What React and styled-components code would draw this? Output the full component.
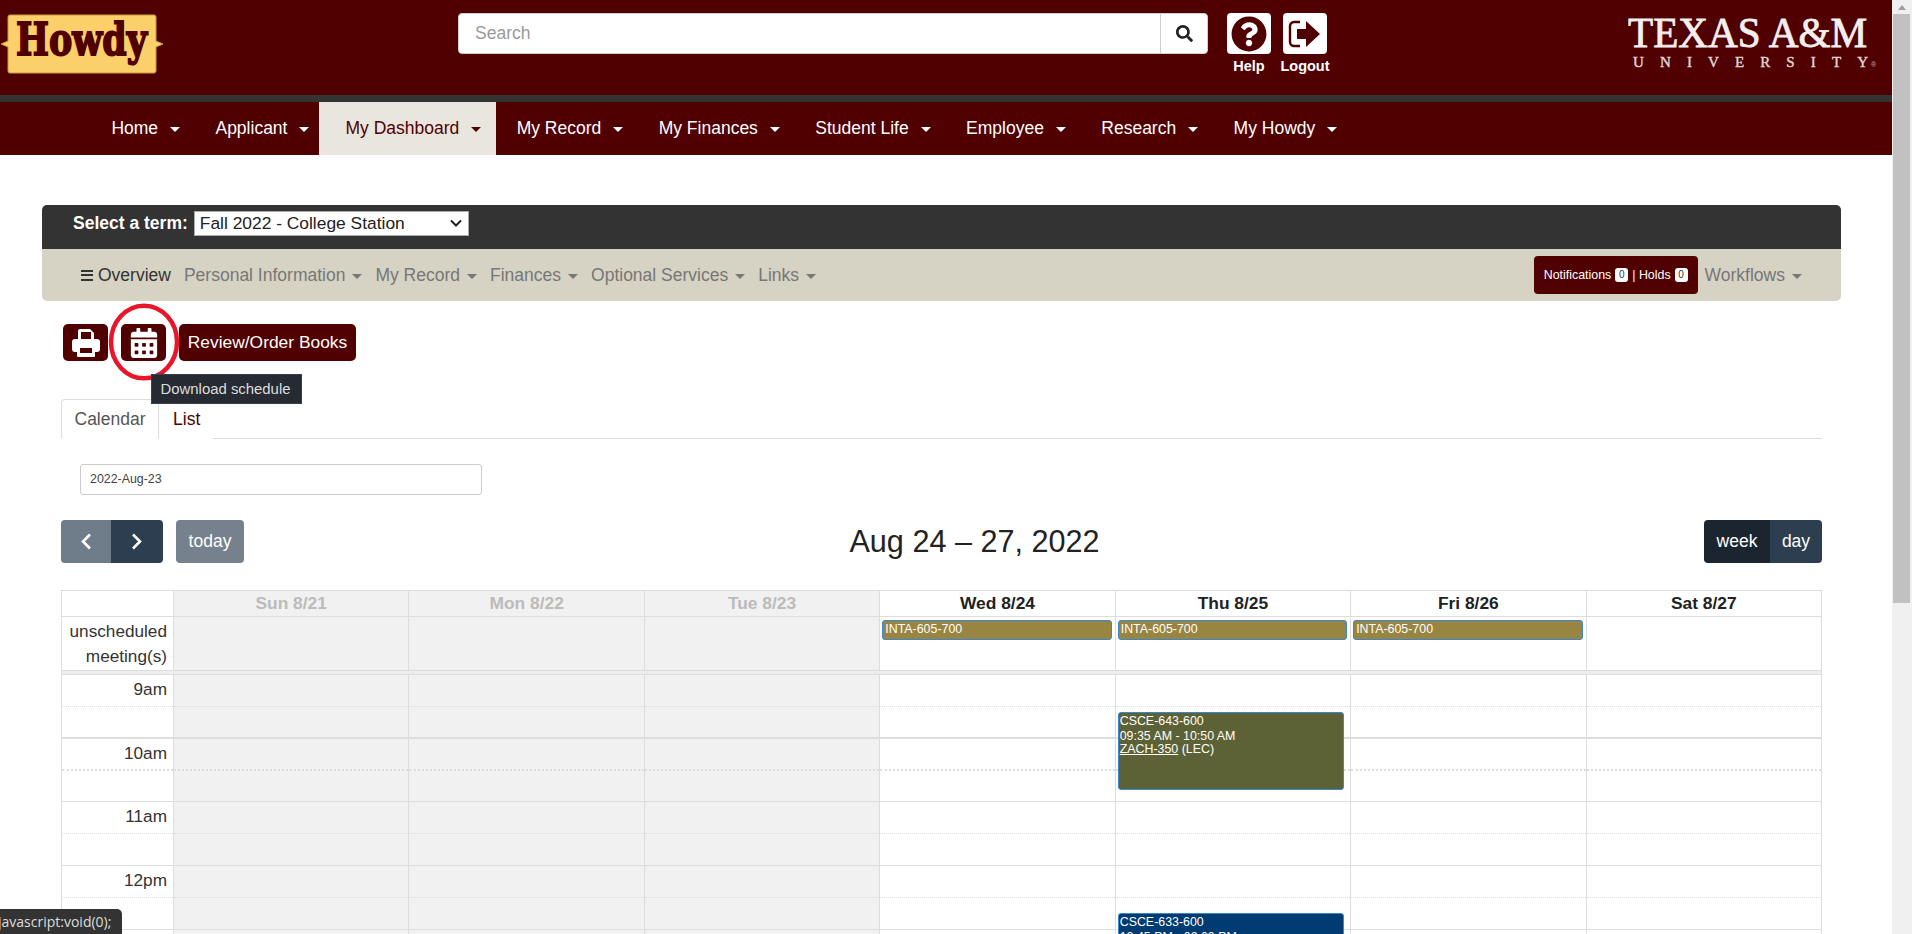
import React from 'react';
import styled, { createGlobalStyle } from 'styled-components';
import { FaCalendarAlt, FaSearch, FaQuestionCircle } from 'react-icons/fa';

const GlobalStyle = createGlobalStyle`
    html, body {
        margin: 0;
        padding: 0;
        height: 100%;
        overflow: hidden;
        background: #fff;
    }
    * {
        box-sizing: border-box;
    }
    body {
        font-family: "Liberation Sans", Arial, sans-serif;
        font-size: 17.5px;
        color: #222;
    }
`;

const topNav = ['Home', 'Applicant', 'My Dashboard', 'My Record', 'My Finances', 'Student Life', 'Employee', 'Research', 'My Howdy'];
const subNav = ['Personal Information', 'My Record', 'Finances', 'Optional Services', 'Links'];
const days = [
    { label: 'Sun 8/21', off: true },
    { label: 'Mon 8/22', off: true },
    { label: 'Tue 8/23', off: true },
    { label: 'Wed 8/24', allDay: true },
    { label: 'Thu 8/25', allDay: true, events: [
        { code: 'CSCE-643-600', time: '09:35 AM - 10:50 AM', room: 'ZACH-350', kind: '(LEC)', top: 37, height: 78, bg: '#5d6236' },
        { code: 'CSCE-633-600', time: '12:45 PM - 02:00 PM', room: 'ZACH-350', kind: '(LEC)', top: 238, height: 78, bg: '#003c71' },
    ] },
    { label: 'Fri 8/26', allDay: true },
    { label: 'Sat 8/27' },
];
const hours = ['9am', '10am', '11am', '12pm', '1pm'];

const LogoutIcon = () => (
    <svg width="34" height="30" viewBox="0 0 34 30">
        <path d="M12 3H6a4 4 0 0 0-4 4v16a4 4 0 0 0 4 4h6" fill="none" stroke="#500000" strokeWidth="2.4" />
        <path d="M9 10h9V2l14 13-14 13v-8H9z" fill="#500000" />
    </svg>
);

const PrintIcon = () => (
    <svg width="28" height="28" viewBox="0 0 28 28">
        <path d="M6 2a2 2 0 0 1 2-2h10l4 4v8H6z" fill="#fff" />
        <rect x="9" y="3" width="10" height="7" fill="#500000" />
        <rect x="0" y="10" width="28" height="13" rx="3" fill="#fff" />
        <rect x="5" y="17" width="18" height="11" rx="1" fill="#fff" />
        <rect x="8" y="19" width="12" height="5" fill="#500000" />
    </svg>
);

const Chevron = ({ left }) => (
    <svg width="12" height="17" viewBox="0 0 12 17">
        <path d={left ? 'M10 1.5L3 8.5l7 7' : 'M2 1.5l7 7-7 7'} fill="none" stroke="#fff" strokeWidth="2.6" />
    </svg>
);

const HowdyLogo = () => (
    <svg width="164" height="62" viewBox="0 0 164 62">
        <path
            d="M8 3a2 2 0 0 1 2-2h144a2 2 0 0 1 2 2v24l7 3-7 3v24a2 2 0 0 1-2 2H10a2 2 0 0 1-2-2V33l-7-3 7-3z"
            fill="#fbd06b"
            stroke="#c9993f"
        />
        <text
            x="16"
            y="41"
            fontFamily="'DejaVu Serif', serif"
            fontWeight="900"
            fontSize="44"
            textLength="131"
            lengthAdjust="spacingAndGlyphs"
            fill="#500000"
            stroke="#500000"
            strokeWidth="1.8"
        >
            Howdy
        </text>
    </svg>
);

const TamuLogo = () => (
    <svg width="250" height="56" viewBox="0 0 250 56">
        <text
            x="0"
            y="33"
            fontFamily="'Liberation Serif', serif"
            fontSize="42"
            textLength="239"
            lengthAdjust="spacingAndGlyphs"
            fill="#f4efef"
            stroke="#f4efef"
            strokeWidth="0.8"
        >
            TEXAS A&amp;M
        </text>
        <text
            x="5"
            y="53"
            fontFamily="'Liberation Serif', serif"
            fontSize="15"
            textLength="235"
            fill="#e4d8d8"
            stroke="#e4d8d8"
            strokeWidth="0.4"
        >
            UNIVERSITY
        </text>
        <text x="243" y="53" fontFamily="'Liberation Sans', sans-serif" fontSize="7" fill="#c8b8b8">®</text>
    </svg>
);

const App = () => {
    return (
        <Shell>
            <GlobalStyle />
            <Main>
                <Header>
                    <LogoSlot><HowdyLogo /></LogoSlot>
                    <SearchBox>
                        <SearchField>Search</SearchField>
                        <SearchButton><FaSearch size={17} /></SearchButton>
                    </SearchBox>
                    <HeaderLinks>
                        <HeaderLink>
                            <IconTile><FaQuestionCircle size={36} color="#500000" /></IconTile>
                            <TileLabel>Help</TileLabel>
                        </HeaderLink>
                        <HeaderLink>
                            <IconTile><LogoutIcon /></IconTile>
                            <TileLabel>Logout</TileLabel>
                        </HeaderLink>
                    </HeaderLinks>
                    <TamuSlot><TamuLogo /></TamuSlot>
                </Header>
                <Strip />
                <TopNav>
                    {topNav.map((item) => (
                        <TopItem key={item} $active={item === 'My Dashboard'}>
                            {item}
                            <TopCaret $active={item === 'My Dashboard'} />
                        </TopItem>
                    ))}
                </TopNav>

                <Card>
                    <TermBar>
                        <TermLabel>Select a term:</TermLabel>
                        <TermSelect>
                            Fall 2022 - College Station
                            <svg width="12" height="8" viewBox="0 0 12 8">
                                <path d="M1 1.5l5 5 5-5" fill="none" stroke="#222" strokeWidth="2" />
                            </svg>
                        </TermSelect>
                    </TermBar>
                    <SubBar>
                        <Burger><span /><span /><span /></Burger>
                        <SubItem $current>Overview</SubItem>
                        {subNav.map((item) => (
                            <SubItem key={item}>{item}<SubCaret /></SubItem>
                        ))}
                        <Notices>
                            Notifications <Count>0</Count> | Holds <Count>0</Count>
                        </Notices>
                        <SubItem>Workflows<SubCaret /></SubItem>
                    </SubBar>
                </Card>

                <Content>
                    <ActionRow>
                        <ActionButton $square><PrintIcon /></ActionButton>
                        <CircledAction>
                            <ActionButton $square><FaCalendarAlt size={30} /></ActionButton>
                            <RedRing width="76" height="82" viewBox="0 0 76 82">
                                <ellipse cx="38" cy="41" rx="33" ry="36.3" fill="none" stroke="#e8152b" strokeWidth="4.5" />
                            </RedRing>
                            <Tooltip>Download schedule</Tooltip>
                        </CircledAction>
                        <ActionButton>Review/Order Books</ActionButton>
                    </ActionRow>

                    <Tabs>
                        <Tab $active>Calendar</Tab>
                        <Tab>List</Tab>
                    </Tabs>

                    <DateField>2022-Aug-23</DateField>

                    <CalendarBar>
                        <BarSide>
                            <PagerGroup>
                                <PagerButton $muted><Chevron left /></PagerButton>
                                <PagerButton><Chevron /></PagerButton>
                            </PagerGroup>
                            <TodayButton>today</TodayButton>
                        </BarSide>
                        <RangeTitle>Aug 24 – 27, 2022</RangeTitle>
                        <BarSide $right>
                            <ViewButton $active>week</ViewButton>
                            <ViewButton>day</ViewButton>
                        </BarSide>
                    </CalendarBar>

                    <Calendar>
                        <HeadRow>
                            <AxisHead />
                            {days.map((d) => (
                                <DayHead key={d.label} $off={d.off}>{d.label}</DayHead>
                            ))}
                        </HeadRow>
                        <AllDayRow>
                            <AllDayAxis>unscheduled<br />meeting(s)</AllDayAxis>
                            {days.map((d) => (
                                <AllDayCell key={d.label} $off={d.off}>
                                    {d.allDay && <AllDayEvent>INTA-605-700</AllDayEvent>}
                                </AllDayCell>
                            ))}
                        </AllDayRow>
                        <Divider />
                        <TimeGrid>
                            <Column $axis>
                                {hours.map((h, i) => (
                                    <React.Fragment key={h}>
                                        <Slot $heavy={i === 1}><AxisLabel>{h}</AxisLabel></Slot>
                                        <Slot $half $heavy={i === 0} />
                                    </React.Fragment>
                                ))}
                            </Column>
                            {days.map((d) => (
                                <Column key={d.label} $off={d.off}>
                                    {hours.map((h, i) => (
                                        <React.Fragment key={h}>
                                            <Slot $heavy={i === 1} />
                                            <Slot $half $heavy={i === 0} />
                                        </React.Fragment>
                                    ))}
                                    {d.events && d.events.map((ev) => (
                                        <TimedEvent key={ev.code} $top={ev.top} $height={ev.height} $bg={ev.bg}>
                                            <div>{ev.code}</div>
                                            <div>{ev.time}</div>
                                            <EventRoom><u>{ev.room}</u> {ev.kind}</EventRoom>
                                        </TimedEvent>
                                    ))}
                                </Column>
                            ))}
                        </TimeGrid>
                    </Calendar>
                </Content>
            </Main>
            <ScrollTrack>
                <ScrollArrow />
                <ScrollThumb />
            </ScrollTrack>
            <StatusBubble><span>javascript:void(0);</span></StatusBubble>
        </Shell>
    );
};

const Shell = styled.div`
    display: flex;
    height: 100vh;
    overflow: hidden;
`;

const Main = styled.div`
    flex: 1;
    min-width: 0;
    height: 100%;
    overflow: hidden;
`;

const Header = styled.header`
    display: flex;
    align-items: flex-start;
    height: 95px;
    background: #500000;
    padding-top: 13px;
`;

const LogoSlot = styled.div`
    width: 458px;
    margin-top: 1px;
    line-height: 0;
`;

const SearchBox = styled.div`
    display: flex;
    width: 750px;
    height: 41px;
    background: #fff;
    border-radius: 4px;
    border: 1px solid #ccc;
`;

const SearchField = styled.div`
    flex: 1;
    padding: 0 16px;
    line-height: 38px;
    font-size: 17.5px;
    color: #999;
`;

const SearchButton = styled.div`
    display: flex;
    align-items: center;
    justify-content: center;
    width: 47px;
    color: #222;
    border-left: 1px solid #ccc;
`;

const HeaderLinks = styled.div`
    display: flex;
    gap: 12px;
    margin-left: 19px;
`;

const HeaderLink = styled.div`
    display: flex;
    flex-direction: column;
    align-items: center;
    width: 44px;
`;

const IconTile = styled.div`
    display: flex;
    align-items: center;
    justify-content: center;
    width: 44px;
    height: 41px;
    background: #fff;
    border-radius: 4px;
`;

const TileLabel = styled.div`
    margin-top: 4px;
    font-size: 14.5px;
    font-weight: 700;
    color: #fff;
    line-height: 17px;
`;

const TamuSlot = styled.div`
    margin-left: auto;
    margin-right: 14px;
    margin-top: 1px;
    line-height: 0;
`;

const Strip = styled.div`
    height: 7px;
    background: #333;
`;

const TopNav = styled.nav`
    display: flex;
    height: 53px;
    padding-left: 91px;
    background: #500000;
`;

const TopItem = styled.div`
    display: flex;
    align-items: center;
    padding: 0 15px 0 ${(p) => (p.$active ? '26px' : '20.4px')};
    margin-left: ${(p) => (p.$active ? '-5px' : '0')};
    font-size: 17.5px;
    color: ${(p) => (p.$active ? '#500000' : '#fff')};
    background: ${(p) => (p.$active ? '#e9e6de' : 'transparent')};
`;

const TopCaret = styled.span`
    width: 0;
    height: 0;
    margin-left: 12px;
    margin-top: 1px;
    border-left: 5px solid transparent;
    border-right: 5px solid transparent;
    border-top: 5px solid ${(p) => (p.$active ? '#500000' : '#fff')};
`;

const Card = styled.section`
    margin: 50px 51px 0 42px;
    border-radius: 5px;
    overflow: hidden;
`;

const TermBar = styled.div`
    display: flex;
    align-items: center;
    height: 44px;
    padding: 0 0 8px 31px;
    background: #333;
`;

const TermLabel = styled.div`
    font-size: 17.5px;
    font-weight: 700;
    color: #fff;
    margin-right: 6px;
`;

const TermSelect = styled.div`
    display: flex;
    align-items: center;
    justify-content: space-between;
    width: 275px;
    height: 25px;
    padding: 0 6px 0 5px;
    font-size: 17.4px;
    color: #222;
    background: #fff;
    border: 1px solid #aaa;
`;

const SubBar = styled.div`
    display: flex;
    align-items: center;
    height: 52px;
    padding: 0 39px;
    background: #d6d2c4;
`;

const Burger = styled.div`
    display: flex;
    flex-direction: column;
    justify-content: space-between;
    width: 12px;
    height: 11px;
    margin-right: 5px;

    span {
        height: 2px;
        background: #333;
    }
`;

const SubItem = styled.div`
    display: flex;
    align-items: center;
    margin-right: 13px;
    font-size: 17.5px;
    color: ${(p) => (p.$current ? '#333' : '#777')};

    &:last-child {
        margin-right: 0;
    }
`;

const SubCaret = styled.span`
    width: 0;
    height: 0;
    margin-left: 7px;
    margin-top: 2px;
    border-left: 5px solid transparent;
    border-right: 5px solid transparent;
    border-top: 5px solid #777;
`;

const Notices = styled.div`
    display: flex;
    align-items: center;
    gap: 4px;
    height: 38px;
    margin-left: auto;
    margin-right: 7px;
    padding: 0 10px;
    border-radius: 4px;
    font-size: 12.4px;
    color: #fff;
    background: #500000;
`;

const Count = styled.span`
    display: inline-block;
    width: 13px;
    height: 14px;
    border-radius: 3px;
    font-size: 10px;
    line-height: 13px;
    text-align: center;
    color: #333;
    background: #fff;
`;

const Content = styled.main`
    padding: 0 70px 0 61px;
`;

const ActionRow = styled.div`
    display: flex;
    gap: 13px;
    margin-top: 23px;
    margin-left: 2px;
`;

const ActionButton = styled.div`
    display: flex;
    align-items: center;
    justify-content: center;
    width: ${(p) => (p.$square ? '45px' : '177px')};
    height: 37px;
    font-size: 17.4px;
    color: #fff;
    background: #500000;
    border-radius: 5px;
`;

const CircledAction = styled.div`
    position: relative;
    z-index: 2;
`;

const RedRing = styled.svg`
    position: absolute;
    left: -15px;
    top: -23px;
`;

const Tooltip = styled.div`
    position: absolute;
    left: 30px;
    top: 50px;
    width: 151px;
    height: 30px;
    padding-right: 2px;
    font-size: 14.9px;
    line-height: 28px;
    text-align: center;
    color: #ddd;
    background: #262a32;
    border: 1px solid #3a3e46;
    white-space: nowrap;
`;

const Tabs = styled.div`
    display: flex;
    height: 40px;
    margin-top: 38px;
    border-bottom: 1px solid #ddd;
`;

const Tab = styled.div`
    height: 40px;
    padding: ${(p) => (p.$active ? '0 12.5px' : '1px 13px 0 14px')};
    font-size: 17.5px;
    line-height: 38px;
    color: ${(p) => (p.$active ? '#555' : '#500000')};
    background: #fff;
    ${(p) => p.$active && 'border: 1px solid #ddd; border-bottom-color: #fff; border-radius: 4px 4px 0 0;'}
`;

const DateField = styled.div`
    width: 402px;
    height: 31px;
    margin: 25px 0 0 19px;
    padding: 0 9px;
    font-size: 12.4px;
    line-height: 28px;
    color: #444;
    border: 1px solid #ccc;
    border-radius: 3px;
`;

const CalendarBar = styled.div`
    display: grid;
    grid-template-columns: 1fr auto 1fr;
    align-items: center;
    margin-top: 25px;
    height: 43px;
`;

const BarSide = styled.div`
    display: flex;
    justify-content: ${(p) => (p.$right ? 'flex-end' : 'flex-start')};
    height: 43px;
`;

const PagerGroup = styled.div`
    display: flex;
    margin-right: 13px;
    border-radius: 4px;
    overflow: hidden;
`;

const PagerButton = styled.div`
    display: flex;
    align-items: center;
    justify-content: center;
    width: ${(p) => (p.$muted ? '50px' : '52px')};
    color: #fff;
    background: ${(p) => (p.$muted ? '#6f7c8a' : '#2c3e50')};
`;

const TodayButton = styled.div`
    width: 68px;
    font-size: 17.5px;
    line-height: 42px;
    text-align: center;
    color: #fff;
    background: #76818d;
    border-radius: 4px;
`;

const RangeTitle = styled.h2`
    margin: 0 0 0 66px;
    font-size: 30.6px;
    font-weight: 400;
    color: #222;
`;

const ViewButton = styled.div`
    width: ${(p) => (p.$active ? '66px' : '52px')};
    font-size: 17.5px;
    line-height: 42px;
    text-align: center;
    color: #fff;
    background: ${(p) => (p.$active ? '#1a252f' : '#2c3e50')};
    border-radius: ${(p) => (p.$active ? '4px 0 0 4px' : '0 4px 4px 0')};
`;

const gridColumns = '111px repeat(7, 1fr)';

const Calendar = styled.div`
    margin-top: 27px;
    border: solid #ddd;
    border-width: 1px 1px 0 1px;
`;

const HeadRow = styled.div`
    display: grid;
    grid-template-columns: ${gridColumns};
    height: 26px;
    border-bottom: 1px solid #ddd;
`;

const AxisHead = styled.div``;

const DayHead = styled.div`
    border-left: 1px solid #ddd;
    font-size: 17.4px;
    font-weight: 700;
    line-height: 24px;
    text-align: center;
    color: ${(p) => (p.$off ? '#bbb' : '#222')};
    background: ${(p) => (p.$off ? '#f1f1f1' : '#fff')};
`;

const AllDayRow = styled.div`
    display: grid;
    grid-template-columns: ${gridColumns};
    height: 53px;
`;

const AllDayAxis = styled.div`
    padding: 2px 6px 0 0;
    font-size: 17.2px;
    line-height: 25px;
    text-align: right;
    color: #333;
`;

const AllDayCell = styled.div`
    padding: 3px 3px 0 2px;
    border-left: 1px solid #ddd;
    background: ${(p) => (p.$off ? '#f1f1f1' : '#fff')};
`;

const AllDayEvent = styled.div`
    height: 20px;
    padding-left: 2px;
    font-size: 12.4px;
    line-height: 16px;
    color: #fff;
    background: #998542;
    border: 1px solid #3a87d0;
    border-radius: 3px;
`;

const Divider = styled.div`
    height: 5px;
    background: #eee;
    border-top: 1px solid #ddd;
    border-bottom: 1px solid #ddd;
`;

const TimeGrid = styled.div`
    display: grid;
    grid-template-columns: ${gridColumns};
`;

const Column = styled.div`
    position: relative;
    ${(p) => !p.$axis && 'border-left: 1px solid #ddd;'}
    background: ${(p) => (p.$off ? '#f1f1f1' : '#fff')};
`;

const Slot = styled.div`
    height: 31.85px;
    border-bottom: ${(p) => (p.$heavy ? '2px' : '1px')} ${(p) => (p.$half ? 'solid' : 'dotted')} #ddd;
`;

const AxisLabel = styled.div`
    padding: 2px 6px 0 0;
    font-size: 17.2px;
    line-height: 24px;
    text-align: right;
    color: #333;
`;

const TimedEvent = styled.div`
    position: absolute;
    left: 2px;
    right: 6px;
    top: ${(p) => p.$top}px;
    height: ${(p) => p.$height}px;
    padding: 1px 0 0 1px;
    font-size: 12.4px;
    line-height: 15px;
    color: #fff;
    background: ${(p) => p.$bg};
    border: 1px solid #3a87d0;
    border-radius: 3px;
`;

const EventRoom = styled.div`
    margin-top: -1px;
    line-height: 12px;
`;

const ScrollTrack = styled.div`
    flex: 0 0 20px;
    height: 100%;
    padding: 0 2px 0 1px;
    background: #f0f0f0;
`;

const ScrollArrow = styled.div`
    width: 0;
    height: 0;
    margin: 5px auto 4px;
    border-left: 4px solid transparent;
    border-right: 4px solid transparent;
    border-bottom: 5px solid #a0a0a0;
`;

const ScrollThumb = styled.div`
    height: 589px;
    margin-top: 3px;
    background: #c1c1c1;
`;

const StatusBubble = styled.div`
    position: fixed;
    left: 0;
    bottom: 0;
    width: 122px;
    height: 25px;
    overflow: hidden;
    font-family: "Open Sans", "Noto Sans", sans-serif;
    font-size: 14px;
    line-height: 25px;
    white-space: nowrap;
    color: #ddd;
    background: #333;
    border-top-right-radius: 5px;

    span {
        margin-left: -2px;
    }
`;

export default App;
